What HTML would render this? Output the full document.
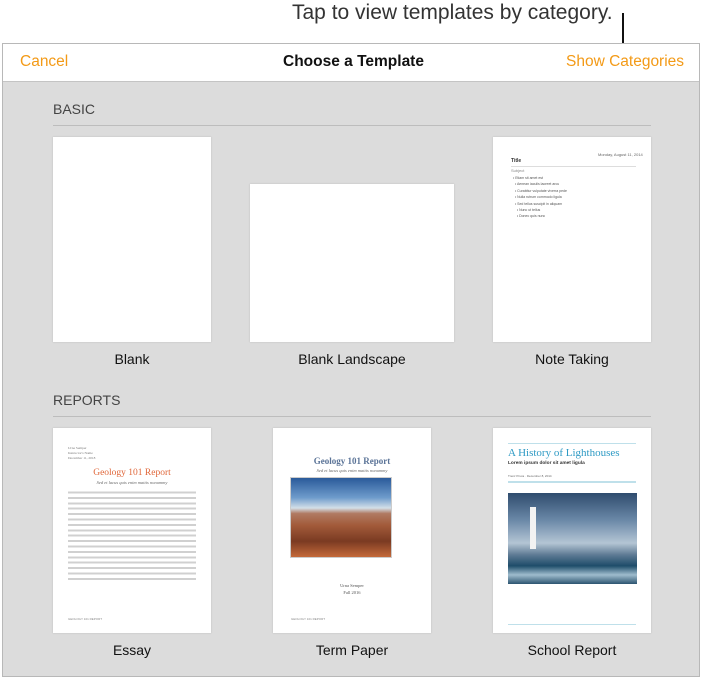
<!DOCTYPE html>
<html><head><meta charset="utf-8"><style>
*{margin:0;padding:0;box-sizing:border-box}
body{width:702px;height:678px;background:#fff;position:relative;overflow:hidden;font-family:"Liberation Sans",sans-serif}
.a{position:absolute}
.pg{position:absolute;background:#fff;box-shadow:0 0 2px rgba(0,0,0,.15)}
.lbl{position:absolute;width:220px;text-align:center;font-size:14px;color:#111}
.sec{position:absolute;left:53px;font-size:14px;color:#444}
.rule{position:absolute;left:53px;width:598px;height:1px;background:#bdbdbd}
.t{position:absolute;white-space:nowrap}
.bars{position:absolute;background:repeating-linear-gradient(#fff 0 1.5px,#d0d0d0 1.5px 3.5px,#fff 3.5px 5.4px)}
</style></head><body>
<div class="t" style="left:292px;top:1px;font-size:21px;color:#333">Tap to view templates by category.</div>
<div class="a" style="left:622px;top:13px;width:2px;height:41px;background:#111"></div>
<div class="a" style="left:2px;top:43px;width:698px;height:634px;border:1px solid #b8b8b8;background:#dcdcdc"></div>
<div class="a" style="left:3px;top:44px;width:696px;height:38px;background:#fff;border-bottom:1px solid #c4c4c4"></div>
<div class="t" style="left:20px;top:53px;font-size:15.5px;color:#f39a17">Cancel</div>
<div class="t" style="left:283px;top:53px;font-size:15.5px;color:#111;font-weight:bold">Choose a Template</div>
<div class="t" style="left:566px;top:53px;font-size:15.5px;color:#f39a17">Show Categories</div>

<div class="sec" style="top:101px">BASIC</div>
<div class="rule" style="top:125px"></div>
<div class="pg" style="left:53px;top:137px;width:158px;height:205px"></div>
<div class="pg" style="left:250px;top:184px;width:204px;height:158px"></div>
<div class="pg" style="left:493px;top:137px;width:158px;height:205px">
 <div class="t" style="left:105px;top:15px;font-size:4px;color:#666">Monday, August 11, 2014</div>
 <div class="t" style="left:18px;top:21px;font-size:5px;color:#333;font-weight:bold">Title</div>
 <div class="a" style="left:18px;top:29px;width:125px;height:1px;background:#ddd"></div>
 <div class="t" style="left:18px;top:31px;font-size:4px;color:#888">Subject</div>
 <div class="t" style="left:20px;top:38px;font-size:3.5px;color:#555;line-height:6.4px">• Etiam sit amet est<br>&nbsp;&nbsp;• Aenean iaculis laoreet arcu<br>&nbsp;&nbsp;• Curabitur vulputate viverra pede<br>&nbsp;&nbsp;• Nulla rutrum commodo ligula<br>&nbsp;&nbsp;• Sed tellus suscipit in aliquam<br>&nbsp;&nbsp;&nbsp;&nbsp;• Nunc ut tellus<br>&nbsp;&nbsp;&nbsp;&nbsp;• Donec quis nunc</div>
</div>
<div class="lbl" style="left:22px;top:351px">Blank</div>
<div class="lbl" style="left:242px;top:351px">Blank Landscape</div>
<div class="lbl" style="left:462px;top:351px">Note Taking</div>

<div class="sec" style="top:392px">REPORTS</div>
<div class="rule" style="top:416px"></div>
<div class="pg" style="left:53px;top:428px;width:158px;height:205px">
 <div class="t" style="left:15px;top:18px;font-size:3.5px;color:#777;line-height:5px;font-family:'Liberation Serif',serif">Urna Semper<br>Instructor's Name<br>December 11, 2018</div>
 <div class="t" style="left:0;width:158px;text-align:center;top:40px;font-size:9.5px;color:#e0673a;font-family:'Liberation Serif',serif">Geology 101 Report</div>
 <div class="t" style="left:0;width:158px;text-align:center;top:52px;font-size:4.5px;color:#666;font-family:'Liberation Serif',serif;font-style:italic">Sed et lacus quis enim mattis nonummy</div>
 <div class="bars" style="left:15px;top:62px;width:128px;height:93px"></div>
 <div class="t" style="left:15px;top:189px;font-size:3px;color:#888">GEOLOGY 101 REPORT</div>
</div>
<div class="pg" style="left:273px;top:428px;width:158px;height:205px">
 <div class="t" style="left:0;width:158px;text-align:center;top:28px;font-size:9px;color:#5a7397;font-weight:bold;font-family:'Liberation Serif',serif">Geology 101 Report</div>
 <div class="t" style="left:0;width:158px;text-align:center;top:40px;font-size:4.5px;color:#666;font-style:italic;font-family:'Liberation Serif',serif">Sed et lacus quis enim mattis nonummy</div>
 <div class="a" style="left:17px;top:49px;width:102px;height:81px;border:1px solid #ccc;background:linear-gradient(#2a5a9a 0%,#6f9ccc 25%,#d3dfe8 38%,#b07a62 45%,#a25a3a 60%,#7a3a22 80%,#c46a3a 100%)"></div>
 <div class="t" style="left:0;width:158px;text-align:center;top:154px;font-size:4.5px;color:#555;line-height:7px;font-family:'Liberation Serif',serif">Urna Semper<br>Fall 2016</div>
 <div class="t" style="left:18px;top:189px;font-size:3px;color:#888">GEOLOGY 101 REPORT</div>
</div>
<div class="pg" style="left:493px;top:428px;width:158px;height:205px">
 <div class="a" style="left:15px;top:15px;width:128px;height:1px;background:#bfe0ea"></div>
 <div class="t" style="left:15px;top:19px;font-size:11px;color:#2e9ac4;font-family:'Liberation Serif',serif">A History of Lighthouses</div>
 <div class="t" style="left:15px;top:33px;font-size:4.8px;color:#333;font-weight:bold">Lorem ipsum dolor sit amet ligula</div>
 <div class="t" style="left:15px;top:46px;font-size:3px;color:#666">Trenz Pruca · December 8, 2014</div>
 <div class="a" style="left:15px;top:53px;width:128px;height:2px;background:#bfe0ea"></div>
 <div class="a" style="left:15px;top:65px;width:129px;height:91px;background:linear-gradient(#2f4c6e 0%,#6b89a8 30%,#b4c5d4 55%,#5e7a94 68%,#1e4d6a 80%,#9fbccd 90%,#2c5470 100%)"></div>
 <div class="a" style="left:37px;top:79px;width:6px;height:42px;background:#f2f2f2"></div>
 <div class="a" style="left:15px;top:196px;width:128px;height:1px;background:#bfe0ea"></div>
</div>
<div class="lbl" style="left:22px;top:642px">Essay</div>
<div class="lbl" style="left:242px;top:642px">Term Paper</div>
<div class="lbl" style="left:462px;top:642px">School Report</div>
</body></html>
